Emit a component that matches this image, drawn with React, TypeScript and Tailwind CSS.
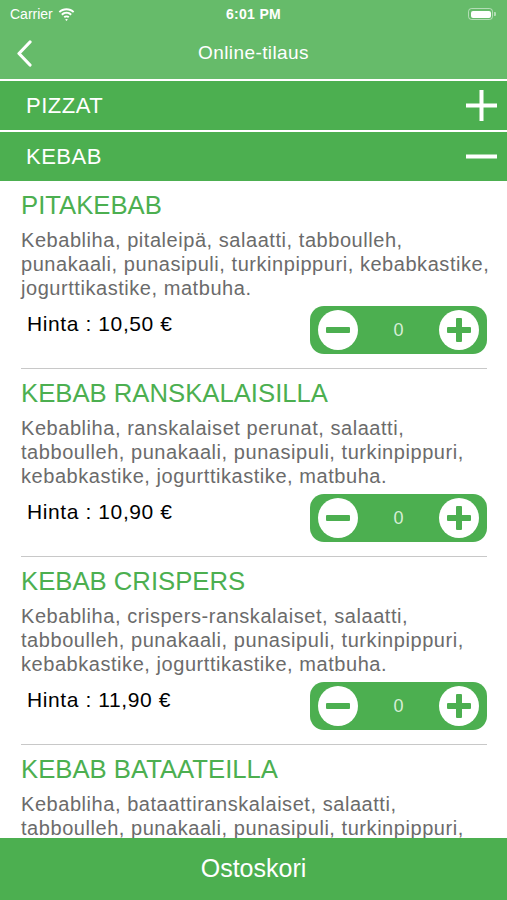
import { useState } from 'react'

// desc lines follow the wrapping of the app screen
const items = [
  {
    name: 'PITAKEBAB',
    desc: [
      'Kebabliha, pitaleipä, salaatti, tabboulleh,',
      'punakaali, punasipuli, turkinpippuri, kebabkastike,',
      'jogurttikastike, matbuha.',
    ],
    price: '10,50 €',
  },
  {
    name: 'KEBAB RANSKALAISILLA',
    desc: [
      'Kebabliha, ranskalaiset perunat, salaatti,',
      'tabboulleh, punakaali, punasipuli, turkinpippuri,',
      'kebabkastike, jogurttikastike, matbuha.',
    ],
    price: '10,90 €',
  },
  {
    name: 'KEBAB CRISPERS',
    desc: [
      'Kebabliha, crispers-ranskalaiset, salaatti,',
      'tabboulleh, punakaali, punasipuli, turkinpippuri,',
      'kebabkastike, jogurttikastike, matbuha.',
    ],
    price: '11,90 €',
  },
  {
    name: 'KEBAB BATAATEILLA',
    desc: [
      'Kebabliha, bataattiranskalaiset, salaatti,',
      'tabboulleh, punakaali, punasipuli, turkinpippuri,',
      'kebabkastike, jogurttikastike, matbuha.',
    ],
    price: '11,90 €',
  },
]

function Stepper() {
  const [count, setCount] = useState(0)
  return (
    <div className="flex h-[48px] w-[177px] items-center justify-between rounded-[14px] bg-[#4caf50] px-[8px]">
      <button
        onClick={() => setCount(Math.max(0, count - 1))}
        className="flex h-[40px] w-[40px] items-center justify-center rounded-full bg-white"
      >
        <span className="block h-[6px] w-[24px] rounded-[1px] bg-[#4caf50]" />
      </button>
      <span className="text-[18px] text-[#d6eed6]">{count}</span>
      <button
        onClick={() => setCount(count + 1)}
        className="relative flex h-[40px] w-[40px] items-center justify-center rounded-full bg-white"
      >
        <span className="absolute h-[6px] w-[24px] rounded-[1px] bg-[#4caf50]" />
        <span className="absolute h-[24px] w-[6px] rounded-[1px] bg-[#4caf50]" />
      </button>
    </div>
  )
}

export default function App() {
  return (
    <div
      className="flex h-[900px] w-[507px] flex-col overflow-hidden bg-white"
      style={{ fontFamily: '"Liberation Sans", Arial, sans-serif' }}
    >
      {/* Status bar + nav */}
      <div className="bg-[#66bb6a] text-white">
        <div className="flex h-[28px] items-center justify-between px-[10px]">
          <div className="flex w-[120px] items-center gap-[5px] text-[14px]">
            <span>Carrier</span>
            <svg width="17" height="13" viewBox="0 0 17 13" fill="white">
              <path d="M8.5 2.2c2.5 0 4.8 1 6.5 2.6l1.3-1.4C14.3 1.4 11.5.2 8.5.2S2.7 1.4.7 3.4L2 4.8c1.7-1.6 4-2.6 6.5-2.6z" />
              <path d="M8.5 5.8c1.5 0 2.9.6 4 1.6l1.3-1.4c-1.4-1.3-3.3-2.2-5.3-2.2s-3.9.9-5.3 2.2l1.3 1.4c1.1-1 2.5-1.6 4-1.6z" />
              <path d="M8.5 9.3c.6 0 1.2.3 1.6.7l1.3-1.4c-.8-.7-1.8-1.2-2.9-1.2s-2.1.5-2.9 1.2L6.9 10c.4-.4 1-.7 1.6-.7zM8.5 13l1.4-1.5c-.4-.3-.9-.5-1.4-.5s-1 .2-1.4.5z" />
            </svg>
          </div>
          <span className="text-[14px] font-semibold tracking-[0.3px]">6:01 PM</span>
          <div className="flex w-[120px] justify-end pr-[1px]">
            <div className="flex items-center">
              <div className="flex h-[12px] w-[25px] items-center rounded-[3.5px] border border-white/50 p-[1.5px]">
                <div className="h-full w-full rounded-[2px] bg-white" />
              </div>
              <div className="ml-[1px] h-[4px] w-[1.5px] rounded-r-[1px] bg-white/50" />
            </div>
          </div>
        </div>
        <div className="relative flex h-[51px] items-center justify-center">
          <svg
            className="absolute left-[16px] top-[12px]"
            width="18"
            height="27"
            viewBox="0 0 18 27"
            fill="none"
            stroke="white"
            strokeWidth="3.2"
            strokeLinecap="round"
            strokeLinejoin="round"
          >
            <path d="M14 2 3 13.5 14 25" />
          </svg>
          <span className="text-[19px] tracking-[0.4px]">Online-tilaus</span>
        </div>
      </div>

      {/* Categories */}
      <div className="mt-[2px] flex h-[49px] items-center justify-between bg-[#4caf50] pl-[26px] pr-[10px] text-white">
        <span className="text-[22px] tracking-[0.5px]">PIZZAT</span>
        <svg width="31" height="31" viewBox="0 0 31 31">
          <rect x="13.5" y="0" width="4" height="31" fill="white" />
          <rect x="0" y="13.5" width="31" height="4" fill="white" />
        </svg>
      </div>
      <div className="mt-[2px] flex h-[49px] items-center justify-between bg-[#4caf50] pl-[26px] pr-[10px] text-white">
        <span className="text-[22px] tracking-[0.5px]">KEBAB</span>
        <svg width="31" height="31" viewBox="0 0 31 31">
          <rect x="0" y="13.5" width="31" height="4" fill="white" />
        </svg>
      </div>

      {/* Items */}
      <div className="flex-1 overflow-hidden pl-[21px] pr-[20px]">
        {items.map((item, i) => (
          <div key={item.name} className={i > 0 ? 'border-t border-[#c8c8c8]' : ''}>
            <div className="pb-[14px] pt-[10px]">
              <h2 className="text-[25.7px] leading-[28px] text-[#4caf50]">{item.name}</h2>
              <p className="mt-[9px] text-[20px] leading-[24px] tracking-[0.55px] text-[#6b6b6b]">
                {item.desc.map((line) => (
                  <span key={line} className="block whitespace-nowrap">
                    {line}
                  </span>
                ))}
              </p>
              <div className="mt-[6px] flex items-start justify-between">
                <span className="pl-[6px] text-[21px] leading-[36px] tracking-[0.6px] text-black">
                  Hinta : {item.price}
                </span>
                <Stepper />
              </div>
            </div>
          </div>
        ))}
      </div>

      {/* Cart */}
      <button className="flex h-[62px] shrink-0 items-center justify-center bg-[#4caf50] text-[25px] text-white">
        Ostoskori
      </button>
    </div>
  )
}
